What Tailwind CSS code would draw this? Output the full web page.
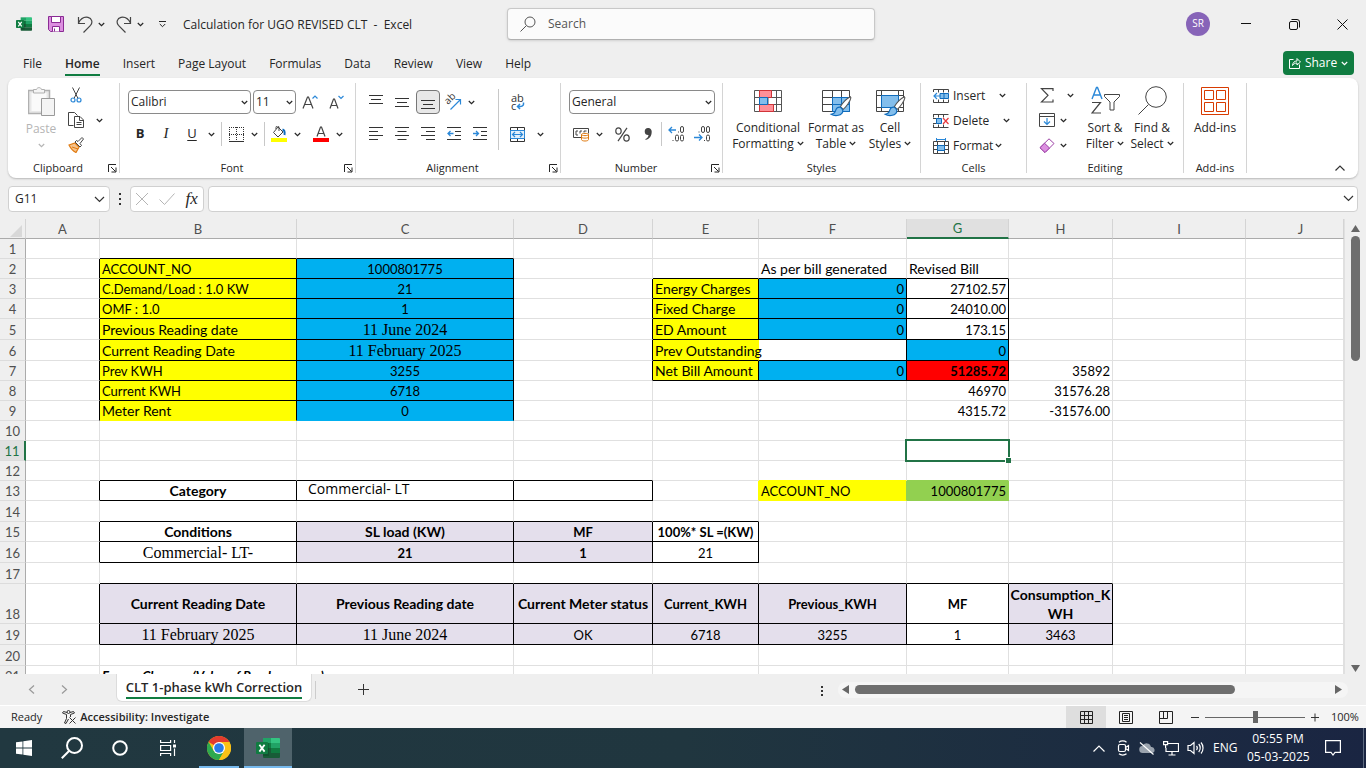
<!DOCTYPE html>
<html lang="en">
<head>
<meta charset="utf-8">
<meta name="viewport" content="width=device-width, initial-scale=1">
<title>Calculation for UGO REVISED CLT - Excel</title>
<script src="https://cdn.jsdelivr.net/npm/@tailwindcss/browser@4"></script>
</head>
<body class="flex h-screen flex-col overflow-hidden bg-[#efefef] font-['Open_Sans',sans-serif] text-xs text-[#262626]">

<!-- shared symbols -->
<svg class="hidden" aria-hidden="true">
  <symbol id="chev" viewBox="0 0 7 5"><path d="M.8 1l2.7 2.7L6.200 1" fill="none" stroke="currentColor" stroke-width="1.200"/></symbol>
  <symbol id="launch" viewBox="0 0 9 9"><path d="M.5 8V.5H8M3 3l4.500 4.500M8 3.500V8H3.500" fill="none" stroke="currentColor"/></symbol>
  <symbol id="excel" viewBox="0 0 24 24">
    <path d="M7 2h8v5H7z" fill="#21a366"/><path d="M15 2h8a1 1 0 0 1 1 1v4h-9z" fill="#33c481"/>
    <path d="M7 7h8v5H7z" fill="#107c41"/><path d="M15 7h9v5h-9z" fill="#21a366"/>
    <path d="M7 12h8v5H7z" fill="#185c37"/><path d="M15 12h9v5h-9z" fill="#107c41"/>
    <path d="M7 17h17v4a1 1 0 0 1-1 1H8a1 1 0 0 1-1-1z" fill="#185c37"/>
    <path d="M7 7h6v13H7z" fill="#0b3d22" opacity=".35"/>
    <rect y="6" width="12" height="12" rx="1" fill="#107c41"/>
    <path d="M3.400 8.800l5.200 6.800M8.600 8.800l-5.200 6.800" stroke="#fff" stroke-width="1.800"/>
  </symbol>
  <symbol id="brush" viewBox="0 0 20 20">
    <path d="M18.500 1.500c-3 1.500-7 5.500-9 9l2.500 2.500c3-2.500 6.500-7.500 7-10.500z" fill="#fff" stroke="#555"/>
    <path d="M9 11c-2 0-3.500 1-4 3.500-.3 1.500-1.500 2.500-4 3 3 2 8.500 1.500 10-1 1-1.500.8-3-.2-4.200z" fill="#83beec" stroke="#0f6cbd"/>
  </symbol>
</svg>

<header>
  <!-- title bar -->
  <div class="grid h-12 grid-cols-[1fr_368px_1fr] items-center pl-4">
    <div class="flex items-center">
      <svg class="size-4" role="img" aria-label="Excel"><use href="#excel"/></svg>
      <button class="ml-4" aria-label="Save"><svg class="size-4" viewBox="0 0 16 16"><path d="M.5.500h15v15H2.500l-2-2z" fill="#dc8fe0" stroke="#8a2b94"/><path d="M3.500.500h9v6h-9zM4.500 15.500v-5h7v5" fill="#fff" stroke="#8a2b94"/><path d="M6.500 12.500v3" stroke="#8a2b94"/></svg></button>
      <button class="ml-[13px]" aria-label="Undo"><svg class="h-[17px] w-4" viewBox="0 0 16 17" fill="none" stroke="#444" stroke-width="1.200"><path d="M1.500 1v6.500H8M1.500 7C4 2 8 .7 11 1.300c4 1 5 5.200 2.500 8L6.500 16.500"/></svg></button>
      <button class="ml-[5px]" aria-label="Undo options"><svg class="h-[5px] w-[7px]"><use href="#chev"/></svg></button>
      <button class="ml-[11px]" aria-label="Redo"><svg class="h-[17px] w-4" viewBox="0 0 16 17" fill="none" stroke="#444" stroke-width="1.200"><path d="M14.500 1v6.500H8M14.500 7C12 2 8 .7 5 1.300c-4 1-5 5.200-2.500 8l7 7.200"/></svg></button>
      <button class="ml-[5px]" aria-label="Redo options"><svg class="h-[5px] w-[7px]"><use href="#chev"/></svg></button>
      <button class="ml-[15px]" aria-label="Customize toolbar"><svg class="h-[7px] w-[7px]" viewBox="0 0 7 7" fill="none" stroke="currentColor"><path d="M0 .5h7M.8 3l2.700 2.700L6.200 3"/></svg></button>
      <h1 class="ml-[17px] pt-0.5 whitespace-pre">Calculation for UGO REVISED CLT  -  Excel</h1>
    </div>
    <div class="flex h-8 items-center gap-3 rounded border border-[#c8c8c8] border-b-[#b0b0b0] bg-[#fbfbfb] px-3 shadow-sm">
      <svg class="size-4 shrink-0" viewBox="0 0 16 16" fill="none" stroke="#555"><circle cx="10" cy="6" r="5"/><path d="M6.300 9.700L.5 15.500"/></svg>
      <input type="search" aria-label="Search" placeholder="Search" class="w-full bg-transparent text-xs outline-none placeholder:text-[#555]">
    </div>
    <div class="flex items-center justify-end pr-[18px]">
      <span class="flex size-6 items-center justify-center rounded-full bg-[#8764b8] text-[10px] text-white">SR</span>
      <button class="ml-[31px]" aria-label="Minimize"><svg class="h-3 w-[10px]" viewBox="0 0 10 12"><path d="M0 5.500h10" stroke="#111"/></svg></button>
      <button class="ml-[38px]" aria-label="Restore"><svg class="size-[11px]" viewBox="0 0 11 11" fill="none" stroke="#111"><rect x=".5" y="2.500" width="8" height="8" rx="1.500"/><path d="M2.500.5H8a2.500 2.500 0 0 1 2.500 2.500v5.500"/></svg></button>
      <button class="ml-[37px]" aria-label="Close"><svg class="size-[11px]" viewBox="0 0 11 11" fill="none" stroke="#111"><path d="M.5.500l10 10M10.500.500l-10 10"/></svg></button>
    </div>
  </div>

  <!-- ribbon tabs -->
  <div class="flex h-[30px] items-center justify-between pr-3 pl-[23px]">
    <nav class="flex gap-[23px] pt-1.5" aria-label="Ribbon tabs">
      <a href="#file">File</a>
      <a href="#home" class="border-b-2 border-[#107c41] pb-0.5 font-semibold">Home</a>
      <a href="#insert">Insert</a>
      <a href="#page">Page Layout</a>
      <a href="#formulas">Formulas</a>
      <a href="#data">Data</a>
      <a href="#review">Review</a>
      <a href="#view">View</a>
      <a href="#help">Help</a>
    </nav>
    <button class="flex h-6 w-[71px] items-center justify-center gap-1 rounded bg-[#107c41] text-white">
      <svg class="size-3" viewBox="0 0 12 12" fill="none" stroke="#fff"><path d="M4.500 2.500h-4v9h10v-4M3.500 8.500c.3-3 2-4.500 4.500-4.500V1.500l3.500 3.500L8 8V6C6 6 4.500 7 3.500 8.500z"/></svg>
      Share
      <svg class="h-[5px] w-[7px]"><use href="#chev"/></svg>
    </button>
  </div>

  <!-- ribbon -->
  <div class="mx-2 flex h-[100px] rounded-lg bg-white shadow-[0_1px_2px_#b8b8b8]">
    <section class="flex w-[111px] flex-col">
      <div class="flex flex-1 pl-3">
        <button class="flex w-[42px] flex-col items-center pt-2 text-[#b5b5b5]">
          <svg class="h-[31px] w-[27px]" viewBox="0 0 27 31"><path d="M.5 4.500h21v23H.5z" fill="#e8e8e8" stroke="#b0b0b0" stroke-width="1.500"/><path d="M3.500 7h15v18h-15z" fill="#fafafa"/><path d="M5.500 7V3.500h3C9 1 13 1 13.500 3.500h3V7z" fill="#f4f4f4" stroke="#b0b0b0"/><path d="M13.500 12.500h13v17h-13z" fill="#f4f4f4" stroke="#9a9a9a"/></svg>
          <span class="pt-0.5 leading-5">Paste</span>
          <svg class="mt-1 h-[5px] w-[7px]"><use href="#chev"/></svg>
        </button>
        <div class="ml-1.5 flex flex-col gap-[9px] pt-[9px]">
          <button aria-label="Cut"><svg class="size-4" viewBox="0 0 16 16" fill="none"><path d="M4.500.500l5.500 11M11.500.500L6 11.500" stroke="#444"/><circle cx="5" cy="13" r="2" stroke="#2b88d8" stroke-width="1.200"/><circle cx="11" cy="13" r="2" stroke="#2b88d8" stroke-width="1.200"/></svg></button>
          <button aria-label="Copy"><svg class="size-4" viewBox="0 0 16 16" fill="#fff" stroke="#444"><path d="M5.500 13.500h-5V.500h6l3 3"/><path d="M6.500 4.500h5.500l3.500 3.500v7.500h-9zM11.500 4.500v4h4M8.500 10.500h5M8.500 12.500h5"/></svg></button>
          <button aria-label="Format Painter"><svg class="size-4" viewBox="0 0 16 16"><path d="M1 8l6-2 4 4-3 5.500C5 14 3 12 1 8z" fill="#f7c38b" stroke="#e07a10" stroke-width="1.200"/><path d="M4 10l6 2" stroke="#e07a10"/><path d="M7 5l5 5 1.500-1.500-1.500-2L15.500 2 14 .5l-4 4-1.500-1z" fill="#fff" stroke="#444"/></svg></button>
        </div>
        <button class="mt-10 ml-3 self-start" aria-label="Copy options"><svg class="h-[5px] w-[7px]"><use href="#chev"/></svg></button>
      </div>
      <div class="flex h-5 items-center pr-0.5"><h2 class="flex-1 text-center text-[11px]">Clipboard</h2><button aria-label="Clipboard settings"><svg class="size-[9px]"><use href="#launch"/></svg></button></div>
    </section>
    <div class="my-[5px] w-px bg-[#d4d4d4]"></div>

    <section class="flex w-[235px] flex-col">
      <div class="flex flex-1 flex-col gap-2 pt-3 pl-2">
        <div class="flex h-6 items-center gap-0.5">
          <div class="relative w-[123px]"><select aria-label="Font" class="h-6 w-full appearance-none rounded border border-[#8a8a8a] bg-white pl-0.5"><option>Calibri</option></select><svg class="pointer-events-none absolute top-[10px] right-[3px] h-[5px] w-[7px]"><use href="#chev"/></svg></div>
          <div class="relative w-[43px]"><select aria-label="Font size" class="h-6 w-full appearance-none rounded border border-[#8a8a8a] bg-white pl-0.5"><option>11</option></select><svg class="pointer-events-none absolute top-[10px] right-[3px] h-[5px] w-[7px]"><use href="#chev"/></svg></div>
          <button class="ml-px w-[22px]" aria-label="Increase font size"><svg class="mx-auto h-[15px] w-4" viewBox="0 0 16 15" fill="none"><path d="M1 13.500L5.500 2h1L11 13.500M2.700 9.500h6.600" stroke="#444" stroke-width="1.200"/><path d="M10.500 3.500L13 1l2.500 2.500" stroke="#2b88d8" stroke-width="1.200"/></svg></button>
          <button class="w-[26px]" aria-label="Decrease font size"><svg class="mx-auto h-[15px] w-4" viewBox="0 0 16 15" fill="none"><path d="M2 13.500L5.500 4h1L10 13.500M3.200 10.500h5.600" stroke="#444" stroke-width="1.200"/><path d="M10.500 1L13 3.500 15.500 1" stroke="#2b88d8" stroke-width="1.200"/></svg></button>
        </div>
        <div class="-ml-px flex h-6 items-center">
          <button class="w-[26px] text-[13px] font-bold">B</button>
          <button class="w-[26px] font-['Liberation_Serif',serif] text-[15px] italic">I</button>
          <button class="w-[26px] text-[13px] underline underline-offset-2">U</button>
          <button class="w-3" aria-label="Underline options"><svg class="mx-auto h-[5px] w-[7px]"><use href="#chev"/></svg></button>
          <span class="ml-1 h-6 w-px bg-[#c8c8c8]"></span>
          <button class="ml-1 w-5" aria-label="Borders"><svg class="mx-auto h-[15px] w-[15px]" viewBox="0 0 15 15" stroke="#333"><path d="M.5 0v14M7.500 0v14M14.500 0v14M0 .5h15M0 7.500h15" stroke-dasharray="1 1"/><path d="M0 14.500h15"/></svg></button>
          <button class="w-4" aria-label="Border options"><svg class="mx-auto h-[5px] w-[7px]"><use href="#chev"/></svg></button>
          <span class="ml-[2px] h-6 w-px bg-[#c8c8c8]"></span>
          <button class="ml-1.5 w-4" aria-label="Fill color"><svg class="h-4 w-4" viewBox="0 0 16 16" fill="none"><path d="M7 1l5 5L7 11 2.500 6.500zM5 3V1.500A1.500 1.500 0 0 1 8 1.500V5" stroke="#444"/><path d="M11.500 3.500c2 .5 2.500 2 2 5.500" stroke="#0f6cbd" stroke-width="2"/><path d="M0 12h16v4H0z" fill="#ff0"/></svg></button>
          <button class="ml-0.5 w-4" aria-label="Fill color options"><svg class="mx-auto h-[5px] w-[7px]"><use href="#chev"/></svg></button>
          <button class="ml-2 w-4" aria-label="Font color"><svg class="h-4 w-4" viewBox="0 0 16 16" fill="none"><path d="M4 10.500L7.500 1h1L12 10.500M5.200 7.500h5.600" stroke="#444" stroke-width="1.200"/><path d="M0 12h16v4H0z" fill="red"/></svg></button>
          <button class="ml-0.5 w-4" aria-label="Font color options"><svg class="mx-auto h-[5px] w-[7px]"><use href="#chev"/></svg></button>
        </div>
      </div>
      <div class="flex h-5 items-center pr-0.5"><h2 class="flex-1 text-center text-[11px]">Font</h2><button aria-label="Font settings"><svg class="size-[9px]"><use href="#launch"/></svg></button></div>
    </section>
    <div class="my-[5px] w-px bg-[#d4d4d4]"></div>

    <section class="flex w-[204px] flex-col">
      <div class="flex flex-1">
        <div class="flex w-[142px] flex-col gap-2 pt-3 pl-[7px]">
          <div class="flex h-6 items-center">
            <button class="w-[26px]" aria-label="Top align"><svg class="mx-auto size-[14px]" viewBox="0 0 14 14" stroke="#333"><path d="M0 .5h14M2 4.500h10M0 8.500h14"/></svg></button>
            <button class="w-[26px]" aria-label="Middle align"><svg class="mx-auto size-[14px]" viewBox="0 0 14 14" stroke="#333"><path d="M0 3.500h14M2 7.500h10M0 11.500h14"/></svg></button>
            <button class="mx-px h-6 w-6 rounded border border-[#777] bg-[#e8e8e8]" aria-label="Bottom align" aria-pressed="true"><svg class="mx-auto size-[14px]" viewBox="0 0 14 14" stroke="#333"><path d="M0 5.500h14M2 9.500h10M0 13.500h14"/></svg></button>
            <button class="w-6" aria-label="Orientation"><svg class="mx-auto size-4 overflow-visible" viewBox="0 0 16 16" fill="none"><text font-size="10" fill="#333" transform="translate(3 11) rotate(-45)">ab</text><path d="M5.500 15.500L15 6M10.500 5.500h5v5" stroke="#2b88d8" stroke-width="1.200"/></svg></button>
            <button class="w-3" aria-label="Orientation options"><svg class="mx-auto h-[5px] w-[7px]"><use href="#chev"/></svg></button>
          </div>
          <div class="flex h-6 items-center">
            <button class="w-[26px]" aria-label="Align left"><svg class="mx-auto size-[14px]" viewBox="0 0 14 14" stroke="#333"><path d="M0 .5h14M0 4.500h9M0 8.500h14M0 12.500h9"/></svg></button>
            <button class="w-[26px]" aria-label="Center"><svg class="mx-auto size-[14px]" viewBox="0 0 14 14" stroke="#333"><path d="M0 .5h14M2.500 4.500h9M0 8.500h14M2.500 12.500h9"/></svg></button>
            <button class="w-[26px]" aria-label="Align right"><svg class="mx-auto size-[14px]" viewBox="0 0 14 14" stroke="#333"><path d="M0 .5h14M5 4.500h9M0 8.500h14M5 12.500h9"/></svg></button>
            <button class="w-[26px]" aria-label="Decrease indent"><svg class="mx-auto size-[14px]" viewBox="0 0 14 14" stroke="#333" fill="none"><path d="M0 .5h14M8 4.500h6M8 8.500h6M0 12.500h14"/><path d="M6.500 6.500H1M3.500 4L1 6.500 3.500 9" stroke="#2b88d8" stroke-width="1.300"/></svg></button>
            <button class="w-[26px]" aria-label="Increase indent"><svg class="mx-auto size-[14px]" viewBox="0 0 14 14" stroke="#333" fill="none"><path d="M0 .5h14M8 4.500h6M8 8.500h6M0 12.500h14"/><path d="M0 6.500h5.500M3 4l2.500 2.500L3 9" stroke="#2b88d8" stroke-width="1.300"/></svg></button>
          </div>
        </div>
        <span class="mt-[11px] h-[61px] w-px bg-[#c8c8c8]"></span>
        <div class="flex flex-col gap-2 pt-3 pl-1.5">
          <button class="h-6 w-6" aria-label="Wrap text"><svg class="mx-auto size-4 overflow-visible" viewBox="0 0 16 16" fill="none"><text x="2" y="8" font-size="11" fill="#333">ab</text><text x="2" y="16" font-size="11" fill="#333">c</text><path d="M14.500 8.500c.3 2.500-.5 4-3 4H8.500M11 10l-2.500 2.500L11 15" stroke="#2b88d8" stroke-width="1.500"/></svg></button>
          <div class="flex h-6 items-center">
            <button class="w-6" aria-label="Merge and center"><svg class="mx-auto size-[15px]" viewBox="0 0 15 15" fill="none"><path d="M.5.500h14v14H.5zM7.500.500v3M7.500 11.500v3" stroke="#333"/><path d="M.5 3.500h14v8H.5z" fill="#e3f0fb" stroke="#2b88d8"/><path d="M2.500 7.500h10M5 5L2.500 7.500 5 10M10 5l2.500 2.500L10 10" stroke="#2b88d8" stroke-width="1.200"/></svg></button>
            <button class="ml-[5px] w-3" aria-label="Merge options"><svg class="mx-auto h-[5px] w-[7px]"><use href="#chev"/></svg></button>
          </div>
        </div>
      </div>
      <div class="flex h-5 items-center pr-0.5"><h2 class="flex-1 text-center text-[11px]">Alignment</h2><button aria-label="Alignment settings"><svg class="size-[9px]"><use href="#launch"/></svg></button></div>
    </section>
    <div class="my-[5px] w-px bg-[#d4d4d4]"></div>

    <section class="flex w-[161px] flex-col">
      <div class="flex flex-1 flex-col gap-2 pt-3 pl-2">
        <div class="relative w-[146px]"><select aria-label="Number format" class="h-6 w-full appearance-none rounded border border-[#8a8a8a] bg-white pl-0.5"><option>General</option></select><svg class="pointer-events-none absolute top-[10px] right-[3px] h-[5px] w-[7px]"><use href="#chev"/></svg></div>
        <div class="flex h-6 items-center">
          <button class="w-6" aria-label="Accounting format"><svg class="mx-auto h-[15px] w-4" viewBox="0 0 16 15" fill="none"><path d="M8 10.500H.5v-9h15v5" stroke="#444"/><path d="M5 4H3v4h2M9 4H7v2.500M13.500 4h-2.500v1.500" stroke="#444"/><path d="M8.500 7.500c0-1.500 7-1.500 7 0v5c0 2-7 2-7 0zM8.500 7.500c0 1.500 7 1.500 7 0M8.500 10c0 1.500 7 1.500 7 0" fill="#fff" stroke="#e07a10"/></svg></button>
          <button class="w-3" aria-label="Accounting options"><svg class="mx-auto h-[5px] w-[7px]"><use href="#chev"/></svg></button>
          <button class="ml-1.5 w-[22px]" aria-label="Percent style"><svg class="mx-auto size-[15px]" viewBox="0 0 15 15" fill="none" stroke="#444" stroke-width="1.200"><ellipse cx="3.500" cy="4" rx="2.700" ry="3.200"/><ellipse cx="11.500" cy="11" rx="2.700" ry="3.200"/><path d="M12 .8L3 14.200"/></svg></button>
          <button class="ml-1 w-[22px]" aria-label="Comma style"><svg class="mx-auto h-3 w-2" viewBox="0 0 8 12"><path d="M4 0a3.500 3.500 0 0 1 3.700 3.700C7.700 8 5.500 11 1.500 12v-1C3.500 10 4.500 8.500 4.500 7A3.400 3.400 0 1 1 4 0z" fill="#444"/></svg></button>
          <span class="ml-0.5 h-6 w-px bg-[#c8c8c8]"></span>
          <button class="ml-0.5 w-6" aria-label="Increase decimal"><svg class="mx-auto size-4" viewBox="0 0 16 16" fill="none" stroke="#444"><rect x="12.500" y=".5" width="3" height="6" rx="1.500"/><rect x="7.500" y="9" width="3" height="6" rx="1.500"/><rect x="12.500" y="9" width="3" height="6" rx="1.500"/><path d="M10.500 5.500v1M5 14v1"/><path d="M8 4H1M4 1L1 4l3 3" stroke="#2b88d8" stroke-width="1.300"/></svg></button>
          <button class="ml-0.5 w-6" aria-label="Decrease decimal"><svg class="mx-auto size-4" viewBox="0 0 16 16" fill="none" stroke="#444"><rect x="7.500" y=".5" width="3" height="6" rx="1.500"/><rect x="12.500" y=".5" width="3" height="6" rx="1.500"/><rect x="12.500" y="9" width="3" height="6" rx="1.500"/><path d="M5 5.500v1M10.500 14v1"/><path d="M0 11.500h8M5 8.500l3 3-3 3" stroke="#2b88d8" stroke-width="1.300"/></svg></button>
        </div>
      </div>
      <div class="flex h-5 items-center pr-0.5"><h2 class="flex-1 text-center text-[11px]">Number</h2><button aria-label="Number settings"><svg class="size-[9px]"><use href="#launch"/></svg></button></div>
    </section>
    <div class="my-[5px] w-px bg-[#d4d4d4]"></div>

    <section class="flex w-[197px] flex-col">
      <div class="flex flex-1 items-start pt-[11px] pl-2 leading-4">
        <button class="flex w-[74px] flex-col items-center gap-1.5 whitespace-nowrap">
          <svg class="h-[25px] w-7" viewBox="0 0 28 25" fill="none"><path d="M.5 1.500h27v21H.5zM5.500 1.500v21M22.500 1.500v21M14 1.500v21M.5 8.500h27M.5 15.500h27" stroke="#555"/><path d="M5.500 1.500h12v7h-12zM5.500 15.500h14v7h-14z" fill="#ff9098" stroke="#d13438"/><path d="M5.500 8.500h8v7h-8z" fill="#83beec" stroke="#0f6cbd"/></svg>
          <span>Conditional<br>Formatting <svg class="mb-0.5 inline h-[5px] w-[7px]"><use href="#chev"/></svg></span>
        </button>
        <button class="flex w-[62px] flex-col items-center gap-1.5 whitespace-nowrap">
          <svg class="h-[25px] w-7 overflow-visible" viewBox="0 0 28 25" fill="none"><path d="M10.500 8.500h17v14h-17z" fill="#83beec"/><path d="M.5 1.500h27v21H.5zM10.500 1.500v21M19.500 1.500v21M.5 8.500h27M.5 15.500h27" stroke="#444"/><path d="M10.500 8.500h17v14h-17zM19.500 8.500v14M10.500 15.500h17" stroke="#0f6cbd"/><use href="#brush" x="7" y="6" width="24" height="22"/></svg>
          <span>Format as<br>Table <svg class="mb-0.5 inline h-[5px] w-[7px]"><use href="#chev"/></svg></span>
        </button>
        <button class="flex w-[46px] flex-col items-center gap-1.5 whitespace-nowrap">
          <svg class="h-[25px] w-7 overflow-visible" viewBox="0 0 28 25" fill="none"><path d="M.5 1.500h27v21H.5zM5.500 1.500v21M22.500 1.500v21M.5 6.500h27M.5 18.500h27" stroke="#444"/><path d="M5.500 6.500h17v12h-17z" fill="#83beec" stroke="#0f6cbd"/><use href="#brush" x="7" y="6" width="24" height="22"/></svg>
          <span>Cell<br>Styles <svg class="mb-0.5 inline h-[5px] w-[7px]"><use href="#chev"/></svg></span>
        </button>
      </div>
      <h2 class="h-5 text-center text-[11px] leading-5">Styles</h2>
    </section>
    <div class="my-[5px] w-px bg-[#d4d4d4]"></div>

    <section class="flex w-[105px] flex-col">
      <div class="flex flex-1 flex-col pt-[5px] pl-3">
        <div class="flex h-[25px] items-center"><button class="flex items-center gap-1"><svg class="h-4 w-4" viewBox="0 0 16 16" fill="none"><path d="M.5 4V1.500h15v3M.5 11.500v3h15v-3M5.500 1.500v3M10.500 1.500v3M5.500 11.500v3M10.500 11.500v3" stroke="#444"/><path d="M7 5.500h8.500v5H7zM11 5.500v5" fill="#83beec" stroke="#0f6cbd"/><path d="M7.500 8H1M4 5L1 8l3 3" stroke="#2b88d8" stroke-width="1.200"/></svg>Insert</button><button class="ml-[14px]" aria-label="Insert options"><svg class="h-[5px] w-[7px]"><use href="#chev"/></svg></button></div>
        <div class="flex h-[25px] items-center"><button class="flex items-center gap-1"><svg class="h-4 w-4" viewBox="0 0 16 16" fill="none"><path d="M0 1.500h15.500M0 14.500h15.500M5.500 1.500v3M5.500 11.500v3M10.500 1.500v3M10.500 11.500v3M.5 1.500v3M.5 11.500v3" stroke="#444"/><path d="M0 5.500h3.500v5H0" stroke="#444"/><path d="M3.500 5.500h5v5h-5z" fill="#83beec" stroke="#0f6cbd"/><path d="M10 5l5.500 6M15.500 5L10 11" stroke="#e8383d" stroke-width="1.200"/></svg>Delete</button><button class="ml-[14px]" aria-label="Delete options"><svg class="h-[5px] w-[7px]"><use href="#chev"/></svg></button></div>
        <div class="flex h-[25px] items-center"><button class="flex items-center gap-1"><svg class="h-4 w-4" viewBox="0 0 16 16" fill="none"><path d="M.5 3.500h15v12H.5zM4.500 3.500v12M11.500 3.500v12M.5 7.500h15M.5 11.500h15" stroke="#444"/><path d="M4.500 7.500h7v5h-7z" fill="#83beec" stroke="#0f6cbd"/><path d="M3.500 0v3M12.500 0v3M3.500 1.500h9" stroke="#2b88d8"/></svg>Format<svg class="-ml-0.5 h-[5px] w-[7px]"><use href="#chev"/></svg></button></div>
      </div>
      <h2 class="h-5 text-center text-[11px] leading-5">Cells</h2>
    </section>
    <div class="my-[5px] w-px bg-[#d4d4d4]"></div>

    <section class="flex w-[156px] flex-col">
      <div class="flex flex-1 pl-3">
        <div class="flex w-9 flex-col pt-[5px]">
          <div class="flex h-[25px] items-center gap-3"><button aria-label="AutoSum"><svg class="h-[15px] w-4" viewBox="0 0 16 15" fill="none" stroke="#444" stroke-width="1.200"><path d="M14 3V.700H2.500L9 7.300 2.500 14H14v-2.500"/></svg></button><button aria-label="AutoSum options"><svg class="h-[5px] w-[7px]"><use href="#chev"/></svg></button></div>
          <div class="flex h-[25px] items-center gap-[5px]"><button aria-label="Fill"><svg class="h-[15px] w-4" viewBox="0 0 16 15" fill="none"><path d="M.5.500h15v13H.5zM.5 3.500h15" stroke="#444"/><path d="M8 5v6.500M5 8.500l3 3 3-3" stroke="#2b88d8" stroke-width="1.200"/></svg></button><button aria-label="Fill options"><svg class="h-[5px] w-[7px]"><use href="#chev"/></svg></button></div>
          <div class="flex h-[25px] items-center gap-[5px]"><button aria-label="Clear"><svg class="h-[15px] w-4" viewBox="0 0 16 15" fill="none" stroke="#9b3fa5"><path d="M10 .8l5 4.700-9 9L1 9.700z" fill="#fff"/><path d="M5.500 5.200L10.500 10 6 14.500 1 9.700z" fill="#dc8fe0"/></svg></button><button aria-label="Clear options"><svg class="h-[5px] w-[7px]"><use href="#chev"/></svg></button></div>
        </div>
        <button class="ml-1.5 flex w-12 flex-col items-center pt-2 leading-4 whitespace-nowrap">
          <svg class="h-[29px] w-[29px]" viewBox="0 0 29 29" fill="none"><path d="M1 13L5.500 1.500h1L11 13M2.700 9h6.600" stroke="#2b88d8" stroke-width="1.400"/><path d="M1 16.500h8.500L1 27h9" stroke="#444" stroke-width="1.200"/><path d="M13.500 8.500h15v2l-5.500 5.500v8h-4v-8l-5.500-5.500z" stroke="#444"/></svg>
          <span class="pt-[5px]">Sort &amp;<br>Filter <svg class="mb-0.5 inline h-[5px] w-[7px]"><use href="#chev"/></svg></span>
        </button>
        <button class="-ml-px flex w-12 flex-col items-center pt-2 leading-4 whitespace-nowrap">
          <svg class="h-[29px] w-[30px]" viewBox="0 0 30 29" fill="none" stroke="#444"><circle cx="19" cy="11" r="10.300"/><path d="M11.500 18.500L1.500 28.500"/></svg>
          <span class="pt-[5px]">Find &amp;<br>Select <svg class="mb-0.5 inline h-[5px] w-[7px]"><use href="#chev"/></svg></span>
        </button>
      </div>
      <h2 class="h-5 text-center text-[11px] leading-5">Editing</h2>
    </section>
    <div class="my-[5px] w-px bg-[#d4d4d4]"></div>

    <section class="flex w-[62px] flex-col">
      <button class="flex flex-1 flex-col items-center pt-[9px]">
        <svg class="size-7" viewBox="0 0 28 28" fill="none" stroke="#d83b01"><path d="M.5.500h27v27H.5zM3.500 3.500h9v9h-9zM15.500 3.500h9v9h-9zM3.500 15.500h9v9h-9zM15.500 15.500h9v9h-9z"/></svg>
        <span class="pt-[5px] leading-4">Add-ins</span>
      </button>
      <h2 class="h-5 text-center text-[11px] leading-5">Add-ins</h2>
    </section>
    <div class="my-[5px] w-px bg-[#d4d4d4]"></div>
    <button class="mr-[13px] mb-[7px] ml-auto self-end" aria-label="Collapse ribbon"><svg class="h-[6px] w-[10px]" viewBox="0 0 10 6" fill="none" stroke="#333" stroke-width="1.200"><path d="M.5 5.500L5 1l4.500 4.500"/></svg></button>
  </div>

  <!-- formula bar -->
  <div class="mx-2 mt-2 mb-[7px] flex h-[26px]">
    <div class="flex w-[102px] items-center rounded border border-[#d0d0d0] bg-white pr-1">
      <input aria-label="Name box" value="G11" class="w-20 flex-1 bg-transparent pl-1.5 outline-none">
      <button aria-label="Name box list"><svg class="h-[7px] w-[11px]" viewBox="0 0 11 7" fill="none" stroke="#333" stroke-width="1.200"><path d="M1 1l4.500 4.500L10 1"/></svg></button>
    </div>
    <svg class="mx-[8px] h-full w-1" viewBox="0 0 4 26" fill="#333"><path d="M1 7h2v2H1zM1 12h2v2H1zM1 17h2v2H1z"/></svg>
    <div class="flex w-[74px] items-center justify-around rounded border border-[#d0d0d0] bg-white">
      <button aria-label="Cancel"><svg class="size-3" viewBox="0 0 12 12" stroke="#b5b5b5"><path d="M0 0l12 12M12 0L0 12"/></svg></button>
      <button aria-label="Enter"><svg class="h-3 w-4" viewBox="0 0 16 12" fill="none" stroke="#b5b5b5"><path d="M.5 6.500L5.500 11.500 15.500.500"/></svg></button>
      <button class="font-['Liberation_Serif',serif] text-[17px] leading-5 italic" aria-label="Insert function">fx</button>
    </div>
    <div class="ml-1 flex flex-1 rounded border border-[#d0d0d0] bg-white pr-[3px]">
      <input aria-label="Formula bar" class="flex-1 bg-transparent px-2 outline-none">
      <button class="mt-2 self-start" aria-label="Expand formula bar"><svg class="h-[7px] w-[11px]" viewBox="0 0 11 7" fill="none" stroke="#333" stroke-width="1.200"><path d="M1 1l4.500 4.500L10 1"/></svg></button>
    </div>
  </div>
</header>

<!-- worksheet -->
<main class="flex min-h-0 flex-1">
  <div class="min-w-0 flex-1 overflow-hidden border-r border-[#e0e0e0] bg-white">
    <table id="sheet" class="w-full table-fixed border-separate border-spacing-0 font-[Lato,sans-serif] text-[13px] leading-[18px] whitespace-nowrap text-black [&_tbody_th]:border-r [&_tbody_th]:border-b [&_tbody_th]:border-[#dcdcdc] [&_tbody_th]:border-r-[#ababab] [&_tbody_th]:bg-[#efefef] [&_tbody_th]:p-0 [&_tbody_th]:align-bottom [&_tbody_th]:font-normal [&_tbody_th]:text-[#505050] [&_td]:border-r [&_td]:border-b [&_td]:border-[#e0e0e0] [&_td]:px-0.5 [&_td]:py-0 [&_td]:align-bottom [&_thead_th]:border-r [&_thead_th]:border-b [&_thead_th]:border-r-[#d4d4d4] [&_thead_th]:border-b-[#ababab] [&_thead_th]:p-0 [&_thead_th]:font-normal">
      <colgroup>
        <col class="w-[26px]"><col class="w-[74px]"><col class="w-[197px]"><col class="w-[217px]"><col class="w-[139px]"><col class="w-[106px]"><col class="w-[148px]"><col class="w-[102px]"><col class="w-[104px]"><col class="w-[133px]"><col>
      </colgroup>
      <thead>
        <tr class="h-5 bg-[#efefef] text-[#505050]">
          <th aria-label="Select all"><svg class="mt-1 ml-[10px] size-3" viewBox="0 0 12 12"><path d="M12 0v12H0z" fill="#d8d8d8"/></svg></th>
          <th scope="col">A</th><th scope="col">B</th><th scope="col">C</th><th scope="col">D</th><th scope="col">E</th><th scope="col">F</th>
          <th scope="col" class="border-b-2! border-b-[#217346]! bg-[#e0e0e0] text-[#217346]">G</th>
          <th scope="col">H</th><th scope="col">I</th><th scope="col"><span class="pl-3">J</span></th>
        </tr>
      </thead>
      <tbody>
        <tr class="h-5"><th scope="row">1</th><td></td><td class="border-b-black!"></td><td class="border-b-black!"></td><td></td><td></td><td></td><td></td><td></td><td></td><td></td></tr>
        <tr class="h-5"><th scope="row">2</th><td class="border-r-black!"></td><td class="border-black! bg-[#ffff00]">ACCOUNT_NO</td><td class="border-black! bg-[#00b0f0] text-center">1000801775</td><td></td><td class="border-b-black!"></td><td class="border-b-black! text-sm leading-[18px]">As per bill generated</td><td class="border-b-black! text-sm leading-[18px]">Revised Bill</td><td></td><td></td><td></td></tr>
        <tr class="h-5"><th scope="row">3</th><td class="border-r-black!"></td><td class="border-black! bg-[#ffff00]">C.Demand/Load : 1.0 KW</td><td class="border-black! bg-[#00b0f0] text-center">21</td><td class="border-r-black!"></td><td class="border-black! bg-[#ffff00] text-sm leading-[18px]">Energy Charges</td><td class="border-black! bg-[#00b0f0] text-right">0</td><td class="border-black! text-right">27102.57</td><td></td><td></td><td></td></tr>
        <tr class="h-5"><th scope="row">4</th><td class="border-r-black!"></td><td class="border-black! bg-[#ffff00]">OMF : 1.0</td><td class="border-black! bg-[#00b0f0] text-center">1</td><td class="border-r-black!"></td><td class="border-black! bg-[#ffff00] text-sm leading-[18px]">Fixed Charge</td><td class="border-black! bg-[#00b0f0] text-right">0</td><td class="border-black! text-right">24010.00</td><td></td><td></td><td></td></tr>
        <tr class="h-[21px]"><th scope="row">5</th><td class="border-r-black!"></td><td class="border-black! bg-[#ffff00] text-sm leading-[18px]">Previous Reading date</td><td class="border-black! bg-[#00b0f0] text-center font-['Liberation_Serif',serif] text-base leading-[18px]">11 June 2024</td><td class="border-r-black!"></td><td class="border-black! bg-[#ffff00] text-sm leading-[18px]">ED Amount</td><td class="border-black! bg-[#00b0f0] text-right">0</td><td class="border-black! text-right">173.15</td><td></td><td></td><td></td></tr>
        <tr class="h-[21px]"><th scope="row">6</th><td class="border-r-black!"></td><td class="border-black! bg-[#ffff00] text-sm leading-[18px]">Current Reading Date</td><td class="border-black! bg-[#00b0f0] text-center font-['Liberation_Serif',serif] text-base leading-[18px]">11 February 2025</td><td class="border-r-black!"></td><td class="border-r-[#ffff00]! border-b-black! bg-[#ffff00] text-sm leading-[18px]">Prev Outstanding</td><td class="border-black!"></td><td class="border-black! bg-[#00b0f0] text-right">0</td><td></td><td></td><td></td></tr>
        <tr class="h-5"><th scope="row">7</th><td class="border-r-black!"></td><td class="border-black! bg-[#ffff00]">Prev KWH</td><td class="border-black! bg-[#00b0f0] text-center">3255</td><td class="border-r-black!"></td><td class="border-black! bg-[#ffff00] text-sm leading-[18px]">Net Bill Amount</td><td class="border-black! bg-[#00b0f0] text-right">0</td><td class="border-black! bg-[#ff0000] text-right font-bold">51285.72</td><td class="text-right">35892</td><td></td><td></td></tr>
        <tr class="h-5"><th scope="row">8</th><td class="border-r-black!"></td><td class="border-black! bg-[#ffff00]">Current KWH</td><td class="border-black! bg-[#00b0f0] text-center">6718</td><td></td><td></td><td></td><td class="text-right">46970</td><td class="text-right">31576.28</td><td></td><td></td></tr>
        <tr class="h-5"><th scope="row">9</th><td class="border-r-black!"></td><td class="border-r-black! border-b-[#ffff00]! bg-[#ffff00] text-sm leading-[18px]">Meter Rent</td><td class="border-r-black! border-b-[#00b0f0]! bg-[#00b0f0] text-center">0</td><td></td><td></td><td></td><td class="text-right">4315.72</td><td class="text-right">-31576.00</td><td></td><td></td></tr>
        <tr class="h-5"><th scope="row">10</th><td></td><td></td><td></td><td></td><td></td><td></td><td></td><td></td><td></td><td></td></tr>
        <tr class="h-5"><th scope="row" class="border-r-2! border-r-[#217346]! bg-[#e0e0e0]! text-[#217346]!">11</th><td></td><td></td><td></td><td></td><td></td><td></td><td class="relative"><span class="absolute -inset-0.5 z-10 border-2 border-[#217346]"></span><span class="absolute -right-[3px] -bottom-[3px] z-20 size-1.5 border-t border-l border-white bg-[#217346]"></span></td><td></td><td></td><td></td></tr>
        <tr class="h-5"><th scope="row">12</th><td></td><td class="border-b-black!"></td><td class="border-b-black!"></td><td class="border-b-black!"></td><td></td><td class="border-b-[#ffff00]!"></td><td class="border-b-[#92d050]!"></td><td></td><td></td><td></td></tr>
        <tr class="h-5"><th scope="row">13</th><td class="border-r-black!"></td><td class="border-black! text-center text-sm leading-[18px] font-bold">Category</td><td class="border-black! pl-[11px]! align-top! font-['Open_Sans',sans-serif] text-sm leading-4 font-medium">Commercial- LT</td><td class="border-black!"></td><td class="border-r-[#ffff00]!"></td><td class="border-[#ffff00]! border-r-[#92d050]! bg-[#ffff00]">ACCOUNT_NO</td><td class="border-[#92d050]! bg-[#92d050] text-right">1000801775</td><td></td><td></td><td></td></tr>
        <tr class="h-[21px]"><th scope="row">14</th><td></td><td class="border-b-black!"></td><td class="border-b-black!"></td><td class="border-b-black!"></td><td class="border-b-black!"></td><td></td><td></td><td></td><td></td><td></td></tr>
        <tr class="h-5"><th scope="row">15</th><td class="border-r-black!"></td><td class="border-black! text-center text-sm leading-[18px] font-bold">Conditions</td><td class="border-black! bg-[#e4dfec] text-center text-sm leading-[18px] font-bold">SL load (KW)</td><td class="border-black! bg-[#e4dfec] text-center font-bold">MF</td><td class="border-black! text-center font-bold">100%* SL =(KW)</td><td></td><td></td><td></td><td></td><td></td></tr>
        <tr class="h-[21px]"><th scope="row">16</th><td class="border-r-black!"></td><td class="border-black! text-center font-['Liberation_Serif',serif] text-base leading-[18px]">Commercial- LT-</td><td class="border-black! bg-[#e4dfec] text-center font-bold">21</td><td class="border-black! bg-[#e4dfec] text-center font-bold">1</td><td class="border-black! text-center">21</td><td></td><td></td><td></td><td></td><td></td></tr>
        <tr class="h-[21px]"><th scope="row">17</th><td></td><td class="border-b-black!"></td><td class="border-b-black!"></td><td class="border-b-black!"></td><td class="border-b-black!"></td><td class="border-b-black!"></td><td class="border-b-black!"></td><td class="border-b-black!"></td><td></td><td></td></tr>
        <tr class="h-10"><th scope="row">18</th><td class="border-r-black!"></td><td class="border-black! bg-[#e4dfec] text-center align-middle! text-sm font-bold">Current Reading Date</td><td class="border-black! bg-[#e4dfec] text-center align-middle! text-sm font-bold">Previous Reading date</td><td class="border-black! bg-[#e4dfec] text-center align-middle! text-sm font-bold">Current Meter status</td><td class="border-black! bg-[#e4dfec] text-center align-middle! font-bold">Current_KWH</td><td class="border-black! bg-[#e4dfec] text-center align-middle! font-bold">Previous_KWH</td><td class="border-black! text-center align-middle! font-bold">MF</td><td class="border-black! bg-[#e4dfec] px-0! text-center align-middle! text-sm leading-[19px] font-bold">Consumption_K<br>WH</td><td></td><td></td></tr>
        <tr class="h-[21px]"><th scope="row">19</th><td class="border-r-black!"></td><td class="border-black! bg-[#e4dfec] text-center font-['Liberation_Serif',serif] text-base leading-[18px]">11 February 2025</td><td class="border-black! bg-[#e4dfec] text-center font-['Liberation_Serif',serif] text-base leading-[18px]">11 June 2024</td><td class="border-black! bg-[#e4dfec] text-center">OK</td><td class="border-black! bg-[#e4dfec] text-center">6718</td><td class="border-black! bg-[#e4dfec] text-center">3255</td><td class="border-black! text-center">1</td><td class="border-black! bg-[#e4dfec] text-center">3463</td><td></td><td></td></tr>
        <tr class="h-[21px]"><th scope="row">20</th><td></td><td></td><td></td><td></td><td></td><td></td><td></td><td></td><td></td><td></td></tr>
        <tr class="h-5"><th scope="row">21</th><td></td><td class="border-r-white! font-bold italic">Energy Charges &nbsp;(Value of Purchase area)</td><td></td><td></td><td></td><td></td><td></td><td></td><td></td><td></td></tr>
      </tbody>
    </table>
  </div>
  <div class="flex w-[21px] flex-col items-center gap-1 pt-1.5 pb-1.5" role="scrollbar" aria-label="Vertical scroll" aria-controls="sheet" aria-valuenow="0">
    <svg class="h-[7px] w-[9px]" viewBox="0 0 9 7"><path d="M4.500 0L9 7H0z" fill="#666"/></svg>
    <span class="h-[125px] w-[9px] rounded-full bg-[#6e6e6e]"></span>
    <svg class="-mb-1 mt-auto h-[7px] w-[9px]" viewBox="0 0 9 7"><path d="M4.500 7L9 0H0z" fill="#666"/></svg>
  </div>
</main>

<footer>
  <!-- sheet tabs -->
  <div class="flex h-8 items-center border-b border-white">
    <button class="ml-7" aria-label="Previous sheet"><svg class="h-[9px] w-[7px]" viewBox="0 0 7 9" fill="none" stroke="#999" stroke-width="1.200"><path d="M6 .500L1.500 4.500 6 8.500"/></svg></button>
    <button class="ml-[26px]" aria-label="Next sheet"><svg class="h-[9px] w-[7px]" viewBox="0 0 7 9" fill="none" stroke="#999" stroke-width="1.200"><path d="M1 .500l4.500 4L1 8.500"/></svg></button>
    <a href="#sheet" class="ml-12 flex h-7 w-[196px] justify-center self-start rounded-b-md border border-t-0 border-[#dcdcdc] bg-white"><span class="mb-0.5 border-b-2 border-[#107c41] text-[13px] leading-[26px] font-semibold whitespace-nowrap">CLT 1-phase kWh Correction</span></a>
    <span class="ml-[3px] h-[18px] w-px bg-[#ccc]"></span>
    <button class="ml-[42px]" aria-label="New sheet"><svg class="size-[11px]" viewBox="0 0 11 11" stroke="#333"><path d="M5.500 0v11M0 5.500h11"/></svg></button>
    <svg class="mt-0.5 ml-auto h-[14px] w-1" viewBox="0 0 4 14" fill="#333"><path d="M1 2h2v2H1zM1 6h2v2H1zM1 10h2v2H1z"/></svg>
    <div class="mr-[18px] ml-[14px] flex h-4 w-[510px] items-center rounded-full bg-[#f5f5f5] px-1" role="scrollbar" aria-label="Horizontal scroll" aria-controls="sheet" aria-valuenow="0">
      <svg class="h-[9px] w-[7px]" viewBox="0 0 7 9"><path d="M0 4.500L7 0v9z" fill="#666"/></svg>
      <span class="ml-[6px] h-[9px] w-[380px] rounded-full bg-[#6e6e6e]"></span>
      <svg class="mr-0.5 ml-auto h-[9px] w-[7px]" viewBox="0 0 7 9"><path d="M7 4.500L0 0v9z" fill="#666"/></svg>
    </div>
  </div>

  <!-- status bar -->
  <div class="flex h-[22px] items-center bg-[#f4f4f4] pr-2 pl-[11px] text-[11px]">
    <span>Ready</span>
    <button class="ml-5 flex items-center gap-1 font-semibold"><svg class="size-[14px]" viewBox="0 0 14 14" fill="none" stroke="#333"><circle cx="6.500" cy="2" r="1.500"/><path d="M5 2.500L1.500 1.500.5 3l4 1.500v4l-2 4.500 1.500.5 2.500-4.500M8 2.500l3.500-1 1 1.500-4 1.500V7M7.500 7.500l6 6M13.500 7.500l-6 6"/></svg>Accessibility: Investigate</button>
    <div class="ml-auto flex h-full">
      <button class="flex w-10 items-center justify-center bg-[#dedede]" aria-label="Normal view"><svg class="size-[13px]" viewBox="0 0 13 13" fill="none" stroke="#222"><path d="M.5.500h12v12H.5zM4.500.500v12M8.500.500v12M.5 4.500h12M.5 8.500h12"/></svg></button>
      <button class="flex w-10 items-center justify-center" aria-label="Page layout view"><svg class="h-[13px] w-[14px]" viewBox="0 0 14 13" fill="none" stroke="#222"><path d="M.5.500h13v12H.5zM3.500 2.500h7v8h-7zM5 4.500h4M5 6.500h4M5 8.500h4"/></svg></button>
      <button class="flex w-10 items-center justify-center" aria-label="Page break view"><svg class="h-[13px] w-[14px]" viewBox="0 0 14 13" fill="none" stroke="#222"><path d="M.5.500h13v12H.5zM.5 7.500h8v-7M4.500.500v7"/></svg></button>
    </div>
    <button class="ml-[5px]" aria-label="Zoom out"><svg class="h-[9px] w-2" viewBox="0 0 8 9" stroke="#333"><path d="M0 4.500h8"/></svg></button>
    <input type="range" aria-label="Zoom" min="0" max="100" value="50" class="mx-[6px] h-3 w-[100px] appearance-none bg-[linear-gradient(#666,#666)] bg-[length:100%_1px] bg-center bg-no-repeat [&::-webkit-slider-thumb]:h-3 [&::-webkit-slider-thumb]:w-[5px] [&::-webkit-slider-thumb]:appearance-none [&::-webkit-slider-thumb]:bg-[#666]">
    <button aria-label="Zoom in"><svg class="h-[9px] w-2" viewBox="0 0 8 9" stroke="#333"><path d="M0 4.500h8M4 .500v8"/></svg></button>
    <button class="ml-3 w-[27px]">100%</button>
  </div>

  <!-- Windows taskbar -->
  <div class="flex h-10 items-center bg-linear-to-r from-[#213840] via-[#20363f] to-[#1a2542] text-white">
    <button class="flex w-12 justify-center" aria-label="Start"><svg class="size-4" viewBox="0 0 16 16" fill="#fff"><path d="M0 2.300L6.500 1.400v6.200H0zM7.300 1.300L16 0v7.600H7.300zM0 8.400h6.500v6.200L0 13.700zM7.300 8.400H16V16l-8.700-1.300z"/></svg></button>
    <button class="flex w-12 justify-center" aria-label="Search"><svg class="size-[22px]" viewBox="0 0 22 22" fill="none" stroke="#fff" stroke-width="2"><circle cx="13.500" cy="8.500" r="7.500"/><path d="M8 14L.8 21.200"/></svg></button>
    <button class="flex w-12 justify-center" aria-label="Cortana"><svg class="size-4" viewBox="0 0 16 16" fill="none" stroke="#fff" stroke-width="2"><circle cx="8" cy="8" r="6.800"/></svg></button>
    <button class="flex w-12 justify-center" aria-label="Task view"><svg class="size-4" viewBox="0 0 16 16" fill="none" stroke="#fff" stroke-width="1.200"><path d="M.600 0v2.500h10V0M.600 5.500h10v5H.600zM.600 16v-2.500h10V16M14.500 0v3M14.500 8.500V16"/><path d="M13 4.500h3v3h-3z" fill="#fff" stroke="none"/></svg></button>
    <button class="ml-[7px] flex h-full w-10 items-center justify-center border-b-2 border-[#76b9ed]" aria-label="Google Chrome"><svg class="mt-0.5 size-6" viewBox="0 0 24 24"><circle cx="12" cy="12" r="12" fill="#fbc116"/><path d="M12 12L1.600 6A12 12 0 0 1 22.400 6H12z" fill="#e33b2e"/><path d="M1.600 6A12 12 0 0 0 12 24l5.200-9L12 12 6.800 15z" fill="#2da94f"/><path d="M12 6h10.400A12 12 0 0 1 12 24l5.200-9z" fill="#fbc116"/><circle cx="12" cy="12" r="6" fill="#fff"/><circle cx="12" cy="12" r="4.800" fill="#2a7be8"/></svg></button>
    <button class="ml-[5px] flex h-full w-12 items-center justify-center border-b-2 border-[#76b9ed] bg-[#4f636b]" aria-label="Excel"><svg class="mt-0.5 size-6"><use href="#excel"/></svg></button>

    <div class="ml-auto flex items-center gap-2">
      <button class="flex w-4 justify-center" aria-label="Hidden icons"><svg class="h-[7px] w-3" viewBox="0 0 12 7" fill="none" stroke="#fff" stroke-width="1.200"><path d="M.5 6.500L6 1l5.500 5.500"/></svg></button>
      <svg class="size-4" viewBox="0 0 16 16" fill="none" stroke="#fff" stroke-width="1.200" role="img" aria-label="Meet now"><rect x="3.500" y="4.500" width="7" height="7" rx="1.500"/><path d="M10.500 7.500l3-2v5l-3-2M4 2.200C6 .500 9.500.500 11.500 2.200M4 13.800c2 1.700 5.500 1.700 7.500 0"/></svg>
      <svg class="size-4" viewBox="0 0 16 16" role="img" aria-label="OneDrive"><path d="M4 13a3.500 3.500 0 0 1-.5-7A4.500 4.500 0 0 1 12 7a3 3 0 0 1 1 6z" fill="#9aa3ae"/><path d="M1 2.500l13.500 12" stroke="#fff" stroke-width="1.200"/></svg>
      <svg class="size-4" viewBox="0 0 16 16" fill="none" stroke="#fff" stroke-width="1.200" role="img" aria-label="Network"><path d="M5 3.500h10.500v8H3V8M9 11.500V15M5.500 15h7M.6 1.600h4v3h-4zM2.600 4.600V8"/></svg>
      <svg class="h-4 w-[17px]" viewBox="0 0 17 16" fill="none" stroke="#fff" stroke-width="1.200" role="img" aria-label="Volume"><path d="M1 5.500h2.500L7 2.500v11l-3.500-3H1zM9.500 6c1 1.200 1 2.800 0 4M11.700 4c2 2.200 2 5.800 0 8M14 2.500c2.700 3 2.700 8 0 11"/></svg>
    </div>
    <span class="ml-[9px] w-[25px]">ENG</span>
    <div class="ml-[9px] w-[62px] text-center leading-[18px] whitespace-nowrap"><div>05:55 PM</div><div>05-03-2025</div></div>
    <button class="ml-4" aria-label="Notifications"><svg class="size-4" viewBox="0 0 16 16" fill="none" stroke="#fff" stroke-width="1.200"><path d="M.600.600h14.800v11.800H10L8 15l-2-2.600H.600z"/></svg></button>
    <span class="mr-0.5 ml-[22px] h-10 w-px bg-[#5d6a80]"></span>
  </div>
</footer>
</body>
</html>
